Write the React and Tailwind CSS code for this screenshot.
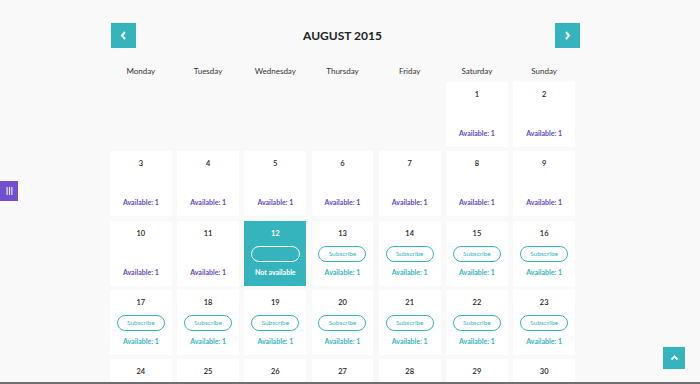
import React from 'react';

const days = ['Monday', 'Tuesday', 'Wednesday', 'Thursday', 'Friday', 'Saturday', 'Sunday'];

// August 2015 starts on a Saturday
const cells = [];
for (let i = 0; i < 5; i++) cells.push(null);
for (let d = 1; d <= 31; d++) cells.push(d);
while (cells.length % 7) cells.push(null);

function Cell({ day }) {
  if (day === null) return <div className="h-[65px]" />;
  if (day === 12) {
    return (
      <div className="h-[65px] bg-[#36b4be] flex flex-col items-center">
        <div className="h-[25px] pt-[9px] leading-[8px] text-[7.5px] font-bold text-white">{day}</div>
        <div className="h-[16px] w-[49px] rounded-full border-[1.5px] border-white" />
        <div className="mt-[6px] leading-[8px] text-[7px] font-bold text-white">Not available</div>
      </div>
    );
  }
  const sub = day > 12;
  return (
    <div className="h-[65px] bg-white flex flex-col items-center">
      <div className="h-[25px] pt-[9px] leading-[8px] text-[7.5px] font-semibold text-[#222]">{day}</div>
      {sub ? (
        <div className="h-[16px] w-[48px] rounded-full border border-[#36b4be] flex items-center justify-center text-[6.5px] text-[#36b4be]">Subscribe</div>
      ) : (
        <div className="h-[16px]" />
      )}
      <div className={`mt-[6px] leading-[8px] text-[7px] font-bold ${sub ? 'text-[#36b4be]' : 'text-[#6446bf]'}`}>Available: 1</div>
    </div>
  );
}

export default function App() {
  return (
    <div className="relative h-[384px] w-[700px] overflow-hidden bg-[#f9f9f9] pt-[23px]" style={{ fontFamily: 'Lato, "Open Sans", sans-serif' }}>
      {/* header */}
      <div className="ml-[111px] w-[469px] h-[25px] flex items-center justify-between">
        <button className="w-[25px] h-[25px] bg-[#36b4be] flex items-center justify-center">
          <svg width="7" height="9" viewBox="0 0 7 9"><path d="M5 1 L2 4.5 L5 8" stroke="white" strokeWidth="2" fill="none" /></svg>
        </button>
        <div className="text-[12px] font-bold text-[#222] pr-[6px]">AUGUST 2015</div>
        <button className="w-[25px] h-[25px] bg-[#36b4be] flex items-center justify-center">
          <svg width="7" height="9" viewBox="0 0 7 9"><path d="M2 1 L5 4.5 L2 8" stroke="white" strokeWidth="2" fill="none" /></svg>
        </button>
      </div>

      {/* weekdays */}
      <div className="ml-[110px] w-[465px] mt-[17px] grid grid-cols-7 gap-x-[5.5px]">
        {days.map(d => (
          <div key={d} className="text-center text-[8px] leading-[12px] text-[#333]">{d}</div>
        ))}
      </div>

      {/* grid */}
      <div className="ml-[110px] w-[465px] mt-[5px] grid grid-cols-7 gap-x-[5.5px] gap-y-[4.3px]">
        {cells.map((d, i) => <Cell key={i} day={d} />)}
      </div>

      {/* side tab */}
      <div className="absolute left-0 top-[181px] w-[18px] h-[20px] bg-[#7050cf] flex items-center justify-center">
        <svg width="7" height="8" viewBox="0 0 7 8">
          <rect x="0.5" y="0" width="1.2" height="8" fill="#e8e4f8" />
          <rect x="2.9" y="0" width="1.2" height="8" fill="#e8e4f8" />
          <rect x="5.3" y="0" width="1.2" height="8" fill="#e8e4f8" />
        </svg>
      </div>

      {/* back to top */}
      <div className="absolute left-[663px] top-[347px] w-[22px] h-[22px] bg-[#36b4be] flex items-center justify-center">
        <svg width="9" height="6" viewBox="0 0 9 6"><path d="M1.5 4.5 L4.5 1.5 L7.5 4.5" stroke="white" strokeWidth="1.8" fill="none" /></svg>
      </div>

      <div className="absolute left-0 bottom-0 w-full h-[2px] bg-[#6f6f6f]" />
    </div>
  );
}
